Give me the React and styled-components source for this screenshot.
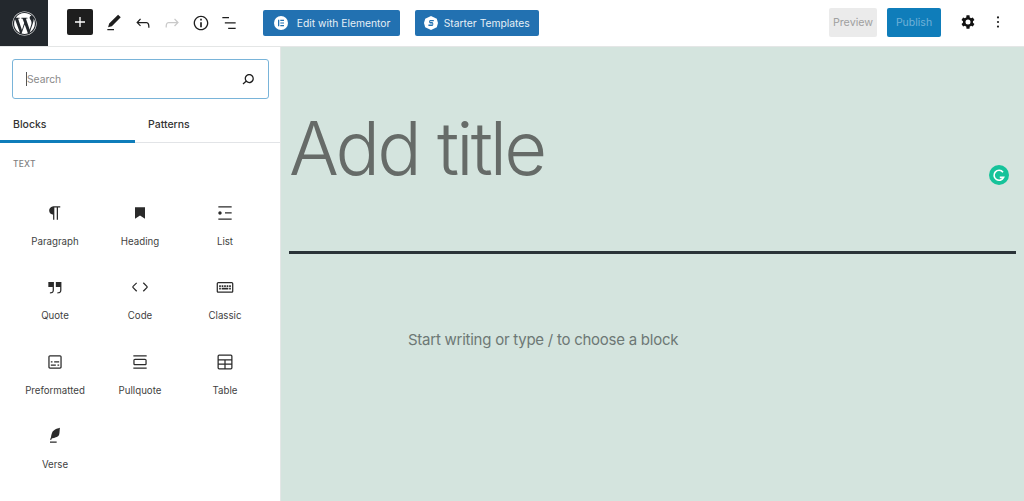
import React from 'react';
import styled, { createGlobalStyle } from 'styled-components';
import { FaWordpress } from 'react-icons/fa';

const GlobalStyle = createGlobalStyle`
	html, body {
		margin: 0;
		padding: 0;
		background: #fff;
		overflow: hidden;
	}
	* {
		box-sizing: border-box;
	}
`;

const Icon = ({ d, size = 24, color = '#1e1e1e', children }) => (
	<svg width={size} height={size} viewBox="0 0 24 24" fill={color}>
		{d && <path d={d} />}
		{children}
	</svg>
);

const paths = {
	plus: 'M18 11.2h-5.2V6h-1.6v5.2H6v1.6h5.2V18h1.6v-5.2H18z',
	pencil: 'M20.1 5.1L16.9 2 6.2 12.7l-1.3 4.4 4.5-1.3L20.1 5.1zM4 20.8h8v-1.5H4v1.5z',
	undo: 'M18.3 11.7c-.6-.6-1.4-.9-2.3-.9H6.7l2.9-3.3-1.1-1-4.5 5L8.5 16l1-1-2.7-2.7H16c.5 0 .9.2 1.3.5 1 1 1 3.4 1 4.5v.3h1.5v-.2c0-1.5 0-4.3-1.5-5.7z',
	redo: 'M15.6 6.5l-1.1 1 2.9 3.3H8c-.9 0-1.7.3-2.3.9-1.4 1.5-1.4 4.2-1.4 5.6v.2h1.5v-.3c0-1.1 0-3.5 1-4.5.3-.3.7-.5 1.3-.5h9.2L14.5 15l1.1 1.1 4.6-4.6-4.6-5z',
	info: 'M12 3.2c-4.8 0-8.8 3.9-8.8 8.8 0 4.8 3.9 8.8 8.8 8.8 4.8 0 8.8-3.9 8.8-8.8 0-4.8-4-8.8-8.8-8.8zm0 16c-4 0-7.2-3.3-7.2-7.2C4.8 8 8 4.8 12 4.8s7.2 3.3 7.2 7.2c0 4-3.2 7.2-7.2 7.2zM11 17h2v-6h-2v6zm0-8h2V7h-2v2z',
	listView: 'M4 4.8h8v1.5H4zM7 11.2h13v1.5H7zM11 17.6h9v1.5h-9z',
	cog: 'M18 12c0-.3 0-.6-.1-.9l1.8-1.4-1.9-3.2-2.2.9c-.5-.4-1-.7-1.5-.9L13.8 4h-3.6l-.3 2.5c-.6.2-1.1.5-1.6.9l-2.2-.9-1.9 3.2 1.8 1.4c0 .3-.1.6-.1.9s0 .6.1.9l-1.8 1.4 1.9 3.2 2.2-.9c.5.4 1 .7 1.6.9l.3 2.5h3.6l.3-2.5c.6-.2 1.1-.5 1.5-.9l2.2.9 1.9-3.2-1.8-1.4c.1-.3.1-.6.1-.9zm-6 3a3 3 0 110-6 3 3 0 010 6z',
	search: 'M13.5 6C10.5 6 8 8.5 8 11.5c0 1.1.3 2.1.9 3l-3.4 3 1 1.1 3.4-2.9c1 .9 2.2 1.4 3.6 1.4 3 0 5.5-2.5 5.5-5.5C19 8.5 16.5 6 13.5 6zm0 9.5c-2.2 0-4-1.8-4-4s1.8-4 4-4 4 1.8 4 4-1.8 4-4 4z',
	paragraph: 'M18.3 4H9.9v-.1l-.9.2c-2.3.4-4 2.4-4 4.8s1.7 4.4 4 4.8l.7.1V20h1.5V5.5h2.9V20h1.5V5.5h2.7V4z',
	heading: 'M6 5h12v14l-6-4-6 4z',
	list: 'M4 4v1.5h16V4H4zm8 8.5h8V11h-8v1.5zM4 20h16v-1.5H4V20zm4-8c0-1.1-.9-2-2-2s-2 .9-2 2 .9 2 2 2 2-.9 2-2z',
	quote: 'M13 6v6h5.2v4c0 .8-.2 1.4-.5 1.7-.6.6-1.6.6-2.5.5h-.3v1.5h.5c1 0 2.3-.1 3.3-1 .6-.6 1-1.6 1-2.8V6H13zm-9 6h5.2v4c0 .8-.2 1.4-.5 1.7-.6.6-1.6.6-2.5.5h-.3v1.5h.5c1 0 2.3-.1 3.3-1 .6-.6 1-1.6 1-2.8V6H4v6z',
	code: 'M20.8 10.7l-4.3-4.3-1.1 1.1 4.3 4.3c.1.1.1.3 0 .4l-4.3 4.3 1.1 1.1 4.3-4.3c.7-.8.7-1.9 0-2.6zM4.2 11.8l4.3-4.3-1-1-4.3 4.3c-.7.7-.7 1.8 0 2.5l4.3 4.3 1.1-1.1-4.3-4.3c-.2-.1-.2-.3-.1-.4z',
	classic: 'M20 6H4c-1.1 0-2 .9-2 2v9c0 1.1.9 2 2 2h16c1.1 0 2-.9 2-2V8c0-1.1-.9-2-2-2zm.5 11c0 .3-.2.5-.5.5H4c-.3 0-.5-.2-.5-.5V8c0-.3.2-.5.5-.5h16c.3 0 .5.2.5.5v9zM10 10H8v2h2v-2zm-5 2h2v-2H5v2zm8-2h-2v2h2v-2zm-5 5h8v-2H8v2zm6-3h2v-2h-2v2zm3 0h2v-2h-2v2zm0 3h2v-2h-2v2zM5 15h2v-2H5v2z',
	preformatted: 'M18 4H6c-1.1 0-2 .9-2 2v12c0 1.1.9 2 2 2h12c1.1 0 2-.9 2-2V6c0-1.1-.9-2-2-2zm.5 14c0 .3-.2.5-.5.5H6c-.3 0-.5-.2-.5-.5V6c0-.3.2-.5.5-.5h12c.3 0 .5.2.5.5v12zM7 16.5h6V15H7v1.5zm4-4h6V11h-6v1.5zM9 11H7v1.5h2V11zm6 5.5h2V15h-2v1.5z',
	pullquote: 'M18 8H6c-1.1 0-2 .9-2 2v4c0 1.1.9 2 2 2h12c1.1 0 2-.9 2-2v-4c0-1.1-.9-2-2-2zm.5 6c0 .3-.2.5-.5.5H6c-.3 0-.5-.2-.5-.5v-4c0-.3.2-.5.5-.5h12c.3 0 .5.2.5.5v4zM4 4v1.5h16V4H4zm0 16h16v-1.5H4V20z',
	table: 'M5 3h14a2 2 0 012 2v14a2 2 0 01-2 2H5a2 2 0 01-2-2V5a2 2 0 012-2zm0 1.5a.5.5 0 00-.5.5v3.7h15V5a.5.5 0 00-.5-.5H5zm-.5 5.7v3.6h6.75v-3.6H4.500zm8.250 0v3.6h6.750v-3.6h-6.750zM4.500 15.300V19a.5.5 0 00.5.5h6.250v-4.200H4.500zm8.250 0v4.200H19a.5.5 0 00.5-.5v-3.700h-6.750z',
	verse: 'M17.8 2l-.9.3c-.1 0-3.600 1-5.200 2.100C10 5.500 9.300 6.500 8.900 7.100c-.6.900-1.700 4.700-1.700 6.300l-.9 2.300c-.2.400 0 .8.400 1 .1 0 .2.100.3.100.3 0 .6-.2.700-.5l.6-1.500c.3 0 .7-.1 1.200-.2.700-.1 1.400-.3 2.200-.5.800-.2 1.600-.5 2.400-.8.700-.3 1.400-.7 1.900-1.200s.8-1.200 1-1.900c.2-.7.3-1.600.4-2.400.1-.8.1-1.700.2-2.500 0-.8.1-1.500.2-2.100V2zM6 20h8v-1.500H6V20z',
};

const blocks = [
	{ label: 'Paragraph', icon: paths.paragraph },
	{ label: 'Heading', icon: paths.heading },
	{ label: 'List', icon: paths.list },
	{ label: 'Quote', icon: paths.quote },
	{ label: 'Code', icon: paths.code },
	{ label: 'Classic', icon: paths.classic },
	{ label: 'Preformatted', icon: paths.preformatted },
	{ label: 'Pullquote', icon: paths.pullquote },
	{ label: 'Table', icon: paths.table },
	{ label: 'Verse', icon: paths.verse },
];

const App = () => (
	<React.Fragment>
		<GlobalStyle />
		<Page>
			<TopBar>
				<LogoTile>
					<FaWordpress size={25} color="#fff" />
				</LogoTile>
				<InserterButton>
					<Icon d={paths.plus} size={20} color="#fff" />
				</InserterButton>
				<ToolGroup>
					<ToolIcon><Icon d={paths.pencil} /></ToolIcon>
					<ToolIcon><Icon d={paths.undo} /></ToolIcon>
					<ToolIcon><Icon d={paths.redo} color="#c9c9c9" /></ToolIcon>
					<ToolIcon><Icon d={paths.info} /></ToolIcon>
					<ToolIcon><Icon d={paths.listView} /></ToolIcon>
				</ToolGroup>
				<ElementorButton>
					<svg width="14" height="14" viewBox="0 0 14 14">
						<circle cx="7" cy="7" r="7" fill="#fff" />
						<path d="M4 3.800h1.300v6.400H4zM6.300 3.800h3.700v1.200H6.300zM6.300 6.400h3.700v1.200H6.300zM6.300 9h3.700v1.200H6.300z" fill="#2271b1" />
					</svg>
					Edit with Elementor
				</ElementorButton>
				<StarterButton>
					<svg width="14" height="14" viewBox="0 0 14 14">
						<path d="M7 0l5.800 2.700L14 7l-1.200 4.300L7 14l-5.800-2.700L0 7l1.200-4.300z" fill="#fff" />
						<path d="M9.800 4H6.200C4.800 4 4.800 7.400 6.200 7.400h1.900c.6 0 .6 1.100 0 1.100H4.400V10h3.800c1.500 0 1.500-4 0-4H6.400c-.5 0-.5-.8 0-.8h3.400z" fill="#2271b1" />
					</svg>
					Starter Templates
				</StarterButton>
				<RightGroup>
					<PreviewButton>Preview</PreviewButton>
					<PublishButton>Publish</PublishButton>
					<SettingsIcon><Icon d={paths.cog} size={20} color="#111" /></SettingsIcon>
					<MoreIcon>
						<Icon size={20}>
							<circle cx="12" cy="6.500" r="1.300" />
							<circle cx="12" cy="12" r="1.300" />
							<circle cx="12" cy="17.500" r="1.300" />
						</Icon>
					</MoreIcon>
				</RightGroup>
			</TopBar>
			<Body>
				<Sidebar>
					<SearchBox>
						<Caret />
						<Placeholder>Search</Placeholder>
						<Icon d={paths.search} size={20} />
					</SearchBox>
					<Tabs>
						<Tab active>Blocks</Tab>
						<Tab>Patterns</Tab>
					</Tabs>
					<SectionTitle>TEXT</SectionTitle>
					<BlockGrid>
						{blocks.map(block => (
							<BlockItem key={block.label}>
								<Icon d={block.icon} size={20} color="#2a2a2a" />
								<BlockLabel>{block.label}</BlockLabel>
							</BlockItem>
						))}
					</BlockGrid>
				</Sidebar>
				<Editor>
					<TitleArea>
						<Title>Add title</Title>
						<GrammarlyBadge>
							<svg width="20" height="20" viewBox="0 0 20 20">
								<circle cx="10" cy="10" r="10" fill="#15c39a" />
								<path d="M14 7.200A5 5 0 1 0 14.600 12.400H10.800" fill="none" stroke="#fff" strokeWidth="1.600" />
							</svg>
						</GrammarlyBadge>
					</TitleArea>
					<Separator />
					<Prompt>Start writing or type / to choose a block</Prompt>
				</Editor>
			</Body>
		</Page>
	</React.Fragment>
);

export default App;

const Page = styled.div`
	width: 1024px;
	height: 501px;
	display: flex;
	flex-direction: column;
	font-family: 'Inter', 'Liberation Sans', sans-serif;
	background: #fff;
	overflow: hidden;
`;

const TopBar = styled.header`
	height: 47px;
	flex: none;
	display: flex;
	align-items: flex-start;
	background: #fff;
	border-bottom: 1px solid #e4e6e6;
`;

const LogoTile = styled.div`
	width: 48px;
	height: 46px;
	flex: none;
	display: flex;
	align-items: center;
	justify-content: center;
	background: #23282d;
`;

const InserterButton = styled.div`
	width: 26px;
	height: 26px;
	margin: 9px 0 0 19px;
	display: flex;
	align-items: center;
	justify-content: center;
	background: #1e1e1e;
	border-radius: 2px;
`;

const ToolGroup = styled.div`
	display: flex;
	margin: 10px 0 0 7px;
`;

const ToolIcon = styled.div`
	width: 28.75px;
	height: 26px;
	display: flex;
	align-items: center;
	justify-content: center;
	svg {
		width: 20px;
		height: 20px;
	}
`;

const HeaderButton = styled.div`
	height: 26px;
	margin-top: 10px;
	display: flex;
	align-items: center;
	background: #2271b1;
	color: #e6eff6;
	border-radius: 2px;
	font-size: 10.3px;
	white-space: nowrap;
`;

const ElementorButton = styled(HeaderButton)`
	width: 137px;
	margin-left: 19px;
	padding-left: 11px;
	gap: 9px;
`;

const StarterButton = styled(HeaderButton)`
	width: 124px;
	margin-left: 15px;
	padding-left: 9px;
	gap: 6px;
`;

const RightGroup = styled.div`
	margin-left: auto;
	display: flex;
	align-items: flex-start;
`;

const PreviewButton = styled.div`
	width: 48px;
	height: 29px;
	margin-top: 8px;
	display: flex;
	align-items: center;
	justify-content: center;
	background: #ebebeb;
	color: #a0a0a0;
	border-radius: 2px;
	font-size: 10.7px;
`;

const PublishButton = styled.div`
	width: 54px;
	height: 29px;
	margin: 8px 0 0 10px;
	display: flex;
	align-items: center;
	justify-content: center;
	background: #0f7dba;
	color: #6fb1d8;
	border-radius: 2px;
	font-size: 10.5px;
`;

const SettingsIcon = styled.div`
	margin: 12px 0 0 17px;
	height: 20px;
`;

const MoreIcon = styled.div`
	margin: 12px 16px 0 10px;
	height: 20px;
`;

const Body = styled.main`
	flex: 1;
	display: flex;
	min-height: 0;
`;

const Sidebar = styled.aside`
	width: 281px;
	flex: none;
	background: #fff;
	border-right: 1px solid #e4e6e6;
	overflow: hidden;
`;

const SearchBox = styled.div`
	width: 257px;
	height: 40px;
	margin: 12px 0 0 12px;
	padding: 0 10px 0 13px;
	display: flex;
	align-items: center;
	border: 1.5px solid #79b4d9;
	border-radius: 3px;
`;

const Caret = styled.span`
	width: 1px;
	height: 14px;
	background: #555;
`;

const Placeholder = styled.span`
	flex: 1;
	font-size: 10.3px;
	color: #8a8a8a;
`;

const Tabs = styled.div`
	display: flex;
	height: 44px;
	border-bottom: 1px solid #e2e4e7;
`;

const Tab = styled.div`
	width: 135px;
	height: 44px;
	padding: 19px 0 0 13px;
	font-size: 10.5px;
	font-weight: 500;
	color: #333;
	border-bottom: ${props => (props.active ? '3px solid #0f7dba' : 'none')};
`;

const SectionTitle = styled.div`
	margin: 16px 0 0 13px;
	font-size: 8.5px;
	line-height: 11px;
	letter-spacing: 0.2px;
	font-weight: 500;
	color: #808080;
`;

const BlockGrid = styled.div`
	display: grid;
	grid-template-columns: repeat(3, 85px);
	grid-auto-rows: 74.3px;
	margin: 33px 0 0 12.500px;
`;

const BlockItem = styled.div`
	display: flex;
	flex-direction: column;
	align-items: center;
`;

const BlockLabel = styled.div`
	margin-top: 12px;
	font-size: 9.7px;
	line-height: 13px;
	color: #3f3f3f;
`;

const Editor = styled.section`
	flex: 1;
	position: relative;
	background: #d4e4de;
`;

const TitleArea = styled.div`
	height: 204px;
	padding: 56px 0 0 8px;
`;

const Title = styled.h1`
	margin: 0;
	font-size: 74px;
	line-height: 90px;
	font-weight: 300;
	letter-spacing: -2.85px;
	color: #666b68;
`;

const GrammarlyBadge = styled.div`
	position: absolute;
	left: 708px;
	top: 118px;
	width: 20px;
	height: 20px;
`;

const Separator = styled.div`
	height: 2.5px;
	margin: 0 8px;
	background: #2a3338;
`;

const Prompt = styled.p`
	margin: 76px 0 0 127px;
	font-size: 15px;
	line-height: 20px;
	letter-spacing: -0.25px;
	color: #6d7875;
`;
